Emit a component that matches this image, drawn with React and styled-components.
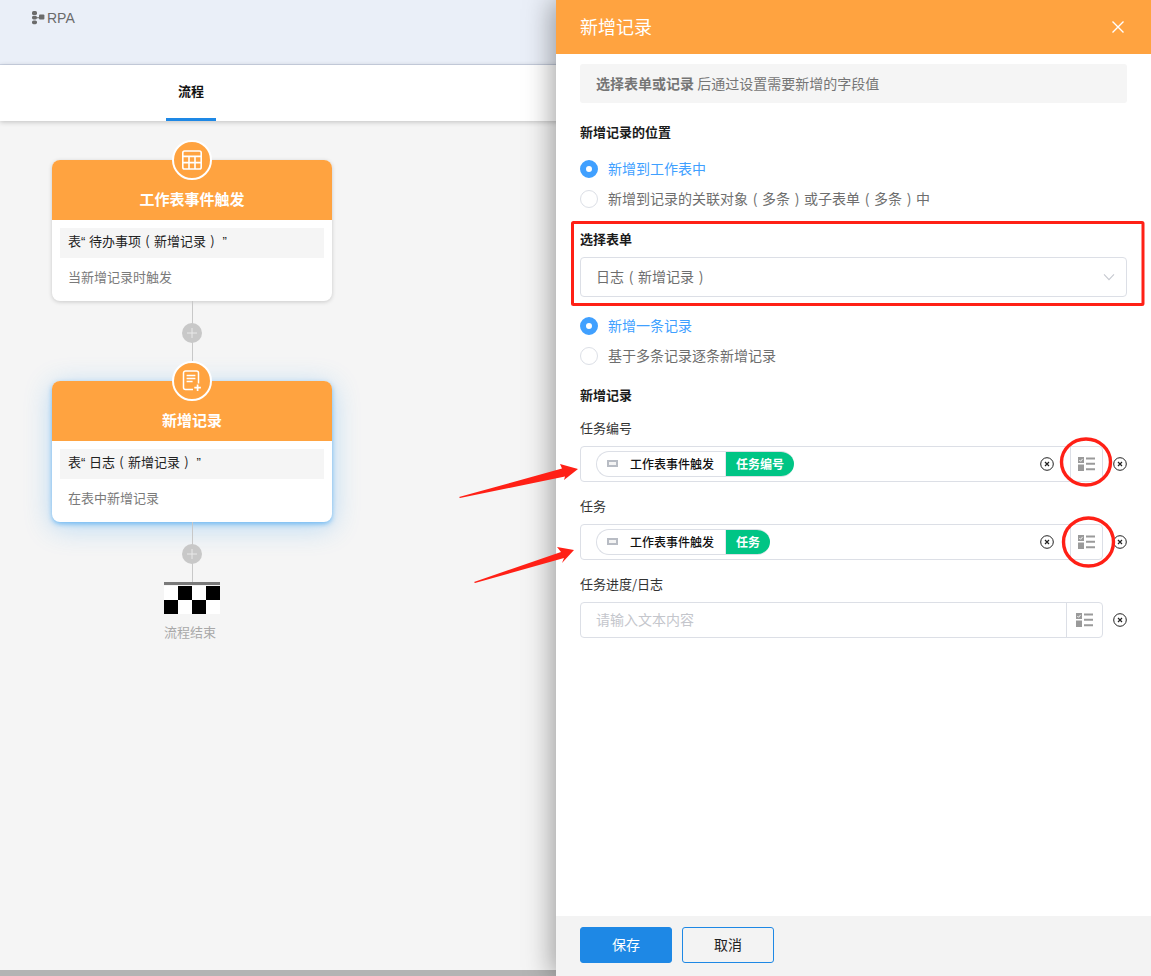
import React from "react";
import styled, { createGlobalStyle } from "styled-components";

const Global = createGlobalStyle`
  html, body { margin: 0; padding: 0; }
  body { font-family: "Noto Sans CJK SC", "Liberation Sans", sans-serif; color: #222; background: #f5f5f5; }
  * { box-sizing: border-box; }
`;

const Page = styled.div`
  position: relative;
  width: 1151px;
  height: 976px;
  overflow: hidden;
  background: #f5f5f5;
`;

/* brackets centred in a full-width em box, as in the reference */
const Bracket = styled.span`
  display: inline-block;
  width: 1em;
  text-align: center;
`;
const Quote = styled.span`
  font-family: "Liberation Sans", sans-serif;
  white-space: pre;
`;

/* left side */
const TopBar = styled.header`
  height: 65px;
  background: #eaeff8;
  border-bottom: 1px solid #ced6e6;
  padding: 10px 0 0 31px;
  display: flex;
  align-items: flex-start;
  gap: 2px;
  color: #6b6b6b;
  font: 14px/17px "Liberation Sans", Roboto, sans-serif;
`;
const TabBar = styled.nav`
  height: 56px;
  background: #fff;
  box-shadow: 0 1px 5px rgba(0, 0, 0, 0.22);
  padding-left: 166px;
  position: relative;
`;
const Tab = styled.div`
  width: 50px;
  height: 56px;
  border-bottom: 3px solid #1e88e5;
  text-align: center;
  font-size: 13px;
  font-weight: 700;
  line-height: 51px;
  color: #111;
`;
const Canvas = styled.main`
  width: 556px;
  padding: 39px 0 0 52px;
  display: flex;
  flex-direction: column;
  align-items: flex-start;
`;
const Node = styled.section`
  position: relative;
  width: 280px;
  height: 141px;
  background: #fff;
  border-radius: 8px;
  box-shadow: ${(p) =>
    p.$active
      ? "0 2px 5px rgba(33,150,243,.55), 0 5px 28px rgba(33,150,243,.3)"
      : "0 1px 4px rgba(0,0,0,.18)"};
`;
const NodeHead = styled.div`
  height: 60px;
  background: #ffa340;
  border-radius: 8px 8px 0 0;
  color: #fff;
  text-align: center;
  font-size: 15px;
  font-weight: 700;
  line-height: 20px;
  padding-top: 29px;
`;
const NodeBadge = styled.div`
  position: absolute;
  top: -20px;
  left: 120px;
  width: 40px;
  height: 40px;
  border-radius: 50%;
  background: #ffa340;
  border: 2px solid #fff;
  display: flex;
  align-items: center;
  justify-content: center;
`;
const NodeTable = styled.div`
  margin: 8px 8px 0;
  height: 30px;
  background: #f5f5f5;
  padding-left: 8px;
  font-size: 13px;
  line-height: 26px;
  color: #222;
`;
const NodeDesc = styled.div`
  padding: 9px 0 0 16px;
  font-size: 13px;
  line-height: 20px;
  color: #7a7a7a;
`;
const Connector = styled.div`
  width: 1px;
  height: ${(p) => p.$h}px;
  margin-left: 140px;
  background: #c8c8c8;
  position: relative;
`;
const Plus = styled.div`
  position: absolute;
  left: -10px;
  top: ${(p) => p.$top}px;
  width: 20px;
  height: 20px;
  border-radius: 50%;
  background: #c8c8c8;
  color: #e9e9e9;
  display: flex;
  align-items: center;
  justify-content: center;
`;
const FinishFlag = styled.div`
  margin-left: 112px;
  width: 56px;
  border-top: 3px solid #7a7a7a;
  padding-top: 1px;
  display: grid;
  grid-template-columns: repeat(4, 14px);
  grid-auto-rows: 14px;
`;
const FlagCell = styled.span`
  background: ${(p) => (p.$dark ? "#000" : "#fff")};
`;
const FinishText = styled.div`
  width: 276px;
  text-align: center;
  font-size: 13px;
  line-height: 20px;
  margin-top: 8px;
  color: #a8a8a8;
`;
const ScrollBar = styled.div`
  position: absolute;
  left: 0;
  bottom: 0;
  width: 556px;
  height: 6px;
  background: #b4b4b4;
`;

/* drawer */
const Drawer = styled.aside`
  position: absolute;
  top: 0;
  right: 0;
  width: 595px;
  height: 976px;
  background: #fff;
  box-shadow: -4px 0 26px rgba(0, 0, 0, 0.36);
  display: flex;
  flex-direction: column;
`;
const DrawerHead = styled.div`
  height: 54px;
  flex: none;
  background: #ffa340;
  color: #fff;
  font-size: 18px;
  padding: 0 26px 3px 24px;
  display: flex;
  align-items: center;
  justify-content: space-between;
`;
const CloseButton = styled.span`
  display: flex;
  margin-top: 3px;
`;
const DrawerBody = styled.div`
  flex: 1;
  padding: 10px 24px 0;
  display: flex;
  flex-direction: column;
  align-items: flex-start;
`;
const Notice = styled.div`
  width: 547px;
  height: 39px;
  background: #f5f5f5;
  border-radius: 3px;
  padding-left: 16px;
  font-size: 14px;
  line-height: 38px;
  color: #757575;
  margin-bottom: 19px;
`;
const NoticeStrong = styled.b`
  font-weight: 700;
`;
const Title = styled.div`
  font-size: 13px;
  font-weight: 700;
  line-height: 20px;
  color: #1b1b1b;
  margin-top: ${(p) => p.$mt || 0}px;
  margin-bottom: ${(p) => p.$mb}px;
`;
const Radio = styled.div`
  height: 30px;
  display: flex;
  align-items: center;
  gap: 10px;
  font-size: 14px;
  color: ${(p) => (p.$on ? "#40a0ff" : "#6e6e6e")};
`;
const RadioText = styled.span`
  padding-bottom: 2px;
`;
const RadioDot = styled.span`
  width: 18px;
  height: 18px;
  border-radius: 50%;
  border: ${(p) => (p.$on ? "6.5px solid #40a0ff" : "1px solid #dcdfe6")};
  background: #fff;
`;
const Select = styled.div`
  width: 547px;
  height: 40px;
  margin: 8px 0 14px;
  border: 1px solid #dcdfe6;
  border-radius: 4px;
  padding: 0 11px 0 15px;
  display: flex;
  align-items: center;
  justify-content: space-between;
  font-size: 14px;
  color: #6e6e6e;
`;
const SelectText = styled.span`
  padding-bottom: 2px;
`;
const FieldLabel = styled.div`
  font-size: 13px;
  line-height: 19px;
  color: #333;
  height: 20px;
  margin-bottom: 8px;
`;
const FieldRow = styled.div`
  width: 547px;
  height: 36px;
  margin-bottom: 14px;
  display: flex;
  align-items: center;
  justify-content: space-between;
`;
const FieldBox = styled.div`
  width: 523px;
  height: 36px;
  border: 1px solid #dcdfe6;
  border-radius: 4px;
  display: flex;
  align-items: center;
  padding-left: 15px;
`;
const Chip = styled.div`
  height: 26px;
  display: flex;
  align-items: stretch;
  border: 1px solid #dcdfe6;
  border-right: 0;
  border-radius: 13px;
  overflow: hidden;
  background: #fff;
`;
const ChipNode = styled.span`
  width: 129px;
  padding: 0 0 1px 10px;
  display: flex;
  align-items: center;
  gap: 12px;
  font-size: 12px;
  font-weight: 500;
  color: #111;
  border-right: 1px solid #e3e6ec;
`;
const ChipRect = styled.i`
  width: 11px;
  height: 7px;
  border: 2px solid #b8bcc4;
  background: #f4f4f4;
  flex: none;
`;
const ChipField = styled.span`
  padding: 0 10px;
  background: #00c585;
  color: #fff;
  font-size: 12px;
  font-weight: 700;
  line-height: 23px;
`;
const Placeholder = styled.span`
  font-size: 14px;
  color: #c4c6cc;
  padding-bottom: 2px;
`;
const BoxClear = styled.span`
  margin-left: auto;
  margin-right: 16px;
  display: flex;
`;
const BoxAction = styled.span`
  width: ${(p) => p.$w}px;
  height: 34px;
  border-left: 1px solid #dcdfe6;
  display: flex;
  align-items: center;
  justify-content: center;
  flex: none;
  margin-left: ${(p) => (p.$auto ? "auto" : "0")};
`;
const DrawerFoot = styled.footer`
  height: 60px;
  flex: none;
  background: #f3f3f3;
  padding: 11px 24px 0;
  display: flex;
  align-items: flex-start;
  gap: 10px;
`;
const Button = styled.button`
  width: 92px;
  height: 36px;
  border-radius: 3px;
  border: 1px solid #1e88e5;
  background: ${(p) => (p.$primary ? "#1e88e5" : "transparent")};
  color: ${(p) => (p.$primary ? "#fff" : "#222")};
  font: 14px "Noto Sans CJK SC", sans-serif;
  padding: 0 0 2px;
`;
const Annotations = styled.svg`
  position: absolute;
  inset: 0;
  pointer-events: none;
`;

const TableIcon = () => (
  <svg width="22" height="22" viewBox="0 0 22 22" fill="none" stroke="#fff" strokeWidth="1.6">
    <rect x="1.8" y="2" width="18.4" height="18" rx="1.8" />
    <path d="M2 7.4h18M2 13.6h18M8 7.4V20M14 7.4V20" />
  </svg>
);
const AddRecordIcon = () => (
  <svg width="20" height="22" viewBox="0 0 20 22" fill="none" stroke="#fff" strokeWidth="1.5">
    <path d="M11 19.6H3.5a2 2 0 0 1-2-2V3a2 2 0 0 1 2-2h11a2 2 0 0 1 2 2v10.6" />
    <path d="M4.6 5.4h8.8M4.6 8.4h8.8M4.6 11.4h6" />
    <path d="M15.6 14.4v6.6M12.3 17.7h6.6" strokeWidth="1.7" />
  </svg>
);
const LogoIcon = () => (
  <svg width="14" height="15" viewBox="0 0 14 15" fill="#6b6b6b">
    <rect x="1" y="1" width="5" height="4" rx="1.6" />
    <rect x="1" y="5.8" width="5" height="3.6" rx="1.6" />
    <rect x="1" y="10.4" width="5" height="3.8" rx="1.6" />
    <rect x="8" y="4.4" width="5.4" height="5" rx="1" />
    <path d="M6 7.2h2v1H6z" />
  </svg>
);
const PlusIcon = () => (
  <svg width="12" height="12" viewBox="0 0 12 12" stroke="currentColor" strokeWidth="1">
    <path d="M6 1v10M1 6h10" />
  </svg>
);
const CloseIcon = () => (
  <svg width="14" height="14" viewBox="0 0 14 14" stroke="#fff" strokeWidth="1.4">
    <path d="M1.5 1.5l11 11M12.5 1.5l-11 11" />
  </svg>
);
const Chevron = () => (
  <svg width="12" height="8" viewBox="0 0 12 8" fill="none" stroke="#c6c9d0" strokeWidth="1.1">
    <path d="M1 1.4l5 5.2 5-5.2" />
  </svg>
);
const ClearIcon = () => (
  <svg width="14" height="14" viewBox="0 0 14 14" fill="none" stroke="#222" strokeWidth="1">
    <circle cx="7" cy="7" r="6.3" />
    <path d="M5 5l4 4M9 5l-4 4" strokeWidth="1.2" />
  </svg>
);
const FieldsIcon = () => (
  <svg width="17" height="14" viewBox="0 0 17 14" fill="#9a9a9a">
    <rect x="0" y="0" width="6" height="6" />
    <path d="M1.3 3l1.3 1.3 2-2.4" fill="none" stroke="#fff" strokeWidth="0.9" />
    <rect x="0" y="7.5" width="6" height="6.5" />
    <path d="M8 0.6h9v2H8zM8 5.8h9v2H8zM8 11.2h9v2H8z" />
  </svg>
);

const Field = ({ label, chip, actionW }) => (
  <>
    <FieldLabel>{label}</FieldLabel>
    <FieldRow>
      <FieldBox>
        {chip ? (
          <>
            <Chip>
              <ChipNode>
                <ChipRect />
                工作表事件触发
              </ChipNode>
              <ChipField>{chip}</ChipField>
            </Chip>
            <BoxClear>
              <ClearIcon />
            </BoxClear>
          </>
        ) : (
          <Placeholder>请输入文本内容</Placeholder>
        )}
        <BoxAction $w={actionW} $auto={!chip}>
          <FieldsIcon />
        </BoxAction>
      </FieldBox>
      <ClearIcon />
    </FieldRow>
  </>
);

const flagCells = [0, 1, 0, 1, 1, 0, 1, 0];

export default function App() {
  return (
    <Page>
      <Global />
      <TopBar>
        <LogoIcon />
        RPA
      </TopBar>
      <TabBar>
        <Tab>流程</Tab>
      </TabBar>
      <Canvas>
        <Node>
          <NodeBadge>
            <TableIcon />
          </NodeBadge>
          <NodeHead>工作表事件触发</NodeHead>
          <NodeTable>
            表<Quote>“ </Quote>待办事项<Bracket>(</Bracket>新增记录<Bracket>)</Bracket><Quote> ”</Quote>
          </NodeTable>
          <NodeDesc>当新增记录时触发</NodeDesc>
        </Node>
        <Connector $h={80}>
          <Plus $top={22}>
            <PlusIcon />
          </Plus>
        </Connector>
        <Node $active>
          <NodeBadge>
            <AddRecordIcon />
          </NodeBadge>
          <NodeHead>新增记录</NodeHead>
          <NodeTable>
            表<Quote>“ </Quote>日志<Bracket>(</Bracket>新增记录<Bracket>)</Bracket><Quote> ”</Quote>
          </NodeTable>
          <NodeDesc>在表中新增记录</NodeDesc>
        </Node>
        <Connector $h={60}>
          <Plus $top={22}>
            <PlusIcon />
          </Plus>
        </Connector>
        <FinishFlag>
          {flagCells.map((d, i) => (
            <FlagCell key={i} $dark={d === 1} />
          ))}
        </FinishFlag>
        <FinishText>流程结束</FinishText>
      </Canvas>
      <ScrollBar />
      <Drawer>
        <DrawerHead>
          新增记录
          <CloseButton>
            <CloseIcon />
          </CloseButton>
        </DrawerHead>
        <DrawerBody>
          <Notice>
            <NoticeStrong>选择表单或记录</NoticeStrong> 后通过设置需要新增的字段值
          </Notice>
          <Title $mb={12}>新增记录的位置</Title>
          <Radio $on>
            <RadioDot $on />
            <RadioText>新增到工作表中</RadioText>
          </Radio>
          <Radio>
            <RadioDot />
            <RadioText>
              新增到记录的关联对象<Bracket>(</Bracket>多条<Bracket>)</Bracket>或子表单<Bracket>(</Bracket>多条<Bracket>)</Bracket>中
            </RadioText>
          </Radio>
          <Title $mb={0} $mt={15}>选择表单</Title>
          <Select>
            <SelectText>
              日志<Bracket>(</Bracket>新增记录<Bracket>)</Bracket>
            </SelectText>
            <Chevron />
          </Select>
          <Radio $on>
            <RadioDot $on />
            <RadioText>新增一条记录</RadioText>
          </Radio>
          <Radio>
            <RadioDot />
            <RadioText>基于多条记录逐条新增记录</RadioText>
          </Radio>
          <Title $mb={13} $mt={14}>新增记录</Title>
          <Field label="任务编号" chip="任务编号" actionW={32} />
          <Field label="任务" chip="任务" actionW={32} />
          <Field label="任务进度/日志" actionW={36} />
        </DrawerBody>
        <DrawerFoot>
          <Button $primary>保存</Button>
          <Button>取消</Button>
        </DrawerFoot>
      </Drawer>
      <Annotations width="1151" height="976" viewBox="0 0 1151 976">
        <rect x="572.5" y="222.5" width="570.5" height="82" rx="1" fill="none" stroke="#ff2016" strokeWidth="3" />
        <ellipse cx="1086" cy="462" rx="24.5" ry="23" fill="none" stroke="#ff2016" strokeWidth="3.4" />
        <ellipse cx="1088.5" cy="542" rx="25" ry="24" fill="none" stroke="#ff2016" strokeWidth="3.4" />
        <polygon points="459,497 562,468.5 560,464 578,469 564,480 565,476.5 460,498" fill="#ff2016" />
        <polygon points="474,582 561,552 557,547 574,550 562,563 564,558 475,583" fill="#ff2016" />
      </Annotations>
    </Page>
  );
}
